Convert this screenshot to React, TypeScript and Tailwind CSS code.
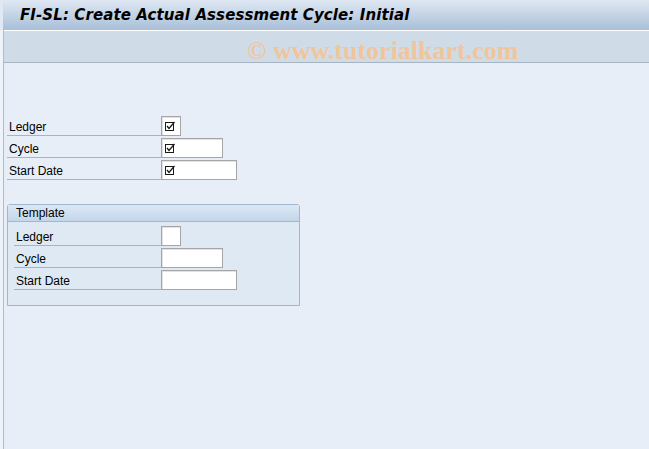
import React from "react";

const font = { fontFamily: '"Liberation Sans", Arial, sans-serif' };

function CheckIcon() {
  return (
    <svg width="11" height="11" viewBox="0 0 11 11" className="block">
      <rect x="0.5" y="1.5" width="8" height="8" fill="none" stroke="#1a1a1a" strokeWidth="1" />
      <path d="M2 5 L4 7.5 L9.5 1" fill="none" stroke="#1a1a1a" strokeWidth="1.3" />
    </svg>
  );
}

function Field({ width, checked }: { width: number; checked?: boolean }) {
  return (
    <div
      className="h-[20px] mt-[2px] self-start bg-white border border-[#a6a6a6] shadow-[inset_1px_1px_0_#e2e2e2] flex items-center pl-[3px]"
      style={{ width }}
    >
      {checked && <CheckIcon />}
    </div>
  );
}

function Row({
  label,
  width,
  labelWidth,
  indent,
  checked,
}: {
  label: string;
  width: number;
  labelWidth: string;
  indent: string;
  checked?: boolean;
}) {
  return (
    <div className={`flex h-[22px] ${indent}`}>
      <div
        className={`${labelWidth} h-[22px] border-b border-[#a9b3be] flex items-center pt-[4px] pl-[2px] text-[12px] text-black`}
      >
        {label}
      </div>
      <Field width={width} checked={checked} />
    </div>
  );
}

export default function App() {
  const fields = [
    { label: "Ledger", width: 20 },
    { label: "Cycle", width: 62 },
    { label: "Start Date", width: 76 },
  ];

  return (
    <div className="w-[649px] h-[449px] flex flex-col bg-[#e7eef7] overflow-hidden" style={font}>
      {/* title bar */}
      <div className="h-[30px] shrink-0 bg-gradient-to-b from-[#dfe8f3] to-[#a8bfd8] flex items-center pl-[17px] border-l-[3px] border-[#dfe8f3]">
        <span
          className="font-bold italic text-black tracking-[0.1px]"
          style={{ fontFamily: '"DejaVu Sans", sans-serif', fontSize: 15 }}
        >
          FI-SL: Create Actual Assessment Cycle: Initial
        </span>
      </div>

      <div className="flex flex-1 min-h-0">
        <div className="w-[3px] bg-[#eef3f9]" />
        <div className="flex-1 flex flex-col border-l border-[#b3bcc6]">
          {/* toolbar */}
          <div className="h-[33px] shrink-0 bg-[#cfdce7] border-t border-white border-b border-b-[#a7b4c1] flex items-center pl-[243px] pt-[8px]">
            <span
              className="text-[26px] leading-none font-bold text-[#f1c59c]"
              style={{ fontFamily: '"Liberation Serif", "Times New Roman", serif' }}
            >
              © www.tutorialkart.com
            </span>
          </div>

          {/* body */}
          <div className="flex-1 pt-[51px]">
            {fields.map((f) => (
              <Row
                key={f.label}
                label={f.label}
                width={f.width}
                labelWidth="w-[154px]"
                indent="ml-[3px]"
                checked
              />
            ))}

            <div className="mt-[24px] ml-[3px] w-[293px] h-[102px] border border-[#a3b7cc] rounded-t-[3px] bg-[#dfe9f4]">
              <div className="h-[17px] bg-gradient-to-b from-[#dce8f4] to-[#c3d6ea] border-b border-[#a3b7cc] flex items-center pl-[8px] text-[12px] text-black">
                Template
              </div>
              <div className="pt-[2px]">
                {fields.map((f) => (
                  <Row
                    key={f.label}
                    label={f.label}
                    width={f.width}
                    labelWidth="w-[147px]"
                    indent="ml-[6px]"
                  />
                ))}
              </div>
            </div>
          </div>
        </div>
      </div>
    </div>
  );
}
